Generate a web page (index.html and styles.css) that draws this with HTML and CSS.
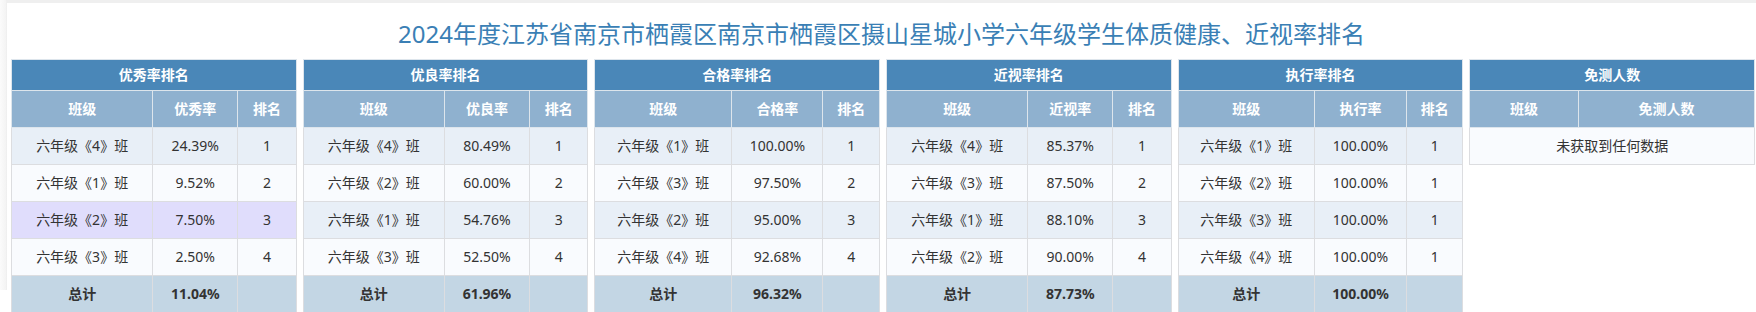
FILE: index.html
```html
<!DOCTYPE html>
<html lang="zh-CN">
<head>
<meta charset="utf-8">
<title>体质健康、近视率排名</title>
<link rel="stylesheet" href="styles.css">
</head>
<body>
<div class="page">
  <div class="side"></div>
  <div class="main">
    <div class="topbar"></div>
    <h1 class="title">2024年度江苏省南京市栖霞区南京市栖霞区摄山星城小学六年级学生体质健康、近视率排名</h1>
    <div class="grid">
      <table class="rank">
        <thead>
          <tr><th class="cap" colspan="3">优秀率排名</th></tr>
          <tr class="sub"><th>班级</th><th>优秀率</th><th>排名</th></tr>
        </thead>
        <tbody>
          <tr><td>六年级《4》班</td><td>24.39%</td><td>1</td></tr>
          <tr><td>六年级《1》班</td><td>9.52%</td><td>2</td></tr>
          <tr class="hover"><td>六年级《2》班</td><td>7.50%</td><td>3</td></tr>
          <tr><td>六年级《3》班</td><td>2.50%</td><td>4</td></tr>
          <tr class="total"><td>总计</td><td>11.04%</td><td></td></tr>
        </tbody>
      </table>
      <table class="rank">
        <thead>
          <tr><th class="cap" colspan="3">优良率排名</th></tr>
          <tr class="sub"><th>班级</th><th>优良率</th><th>排名</th></tr>
        </thead>
        <tbody>
          <tr><td>六年级《4》班</td><td>80.49%</td><td>1</td></tr>
          <tr><td>六年级《2》班</td><td>60.00%</td><td>2</td></tr>
          <tr><td>六年级《1》班</td><td>54.76%</td><td>3</td></tr>
          <tr><td>六年级《3》班</td><td>52.50%</td><td>4</td></tr>
          <tr class="total"><td>总计</td><td>61.96%</td><td></td></tr>
        </tbody>
      </table>
      <table class="rank">
        <thead>
          <tr><th class="cap" colspan="3">合格率排名</th></tr>
          <tr class="sub"><th>班级</th><th>合格率</th><th>排名</th></tr>
        </thead>
        <tbody>
          <tr><td>六年级《1》班</td><td>100.00%</td><td>1</td></tr>
          <tr><td>六年级《3》班</td><td>97.50%</td><td>2</td></tr>
          <tr><td>六年级《2》班</td><td>95.00%</td><td>3</td></tr>
          <tr><td>六年级《4》班</td><td>92.68%</td><td>4</td></tr>
          <tr class="total"><td>总计</td><td>96.32%</td><td></td></tr>
        </tbody>
      </table>
      <table class="rank">
        <thead>
          <tr><th class="cap" colspan="3">近视率排名</th></tr>
          <tr class="sub"><th>班级</th><th>近视率</th><th>排名</th></tr>
        </thead>
        <tbody>
          <tr><td>六年级《4》班</td><td>85.37%</td><td>1</td></tr>
          <tr><td>六年级《3》班</td><td>87.50%</td><td>2</td></tr>
          <tr><td>六年级《1》班</td><td>88.10%</td><td>3</td></tr>
          <tr><td>六年级《2》班</td><td>90.00%</td><td>4</td></tr>
          <tr class="total"><td>总计</td><td>87.73%</td><td></td></tr>
        </tbody>
      </table>
      <table class="rank">
        <thead>
          <tr><th class="cap" colspan="3">执行率排名</th></tr>
          <tr class="sub"><th>班级</th><th>执行率</th><th>排名</th></tr>
        </thead>
        <tbody>
          <tr><td>六年级《1》班</td><td>100.00%</td><td>1</td></tr>
          <tr><td>六年级《2》班</td><td>100.00%</td><td>1</td></tr>
          <tr><td>六年级《3》班</td><td>100.00%</td><td>1</td></tr>
          <tr><td>六年级《4》班</td><td>100.00%</td><td>1</td></tr>
          <tr class="total"><td>总计</td><td>100.00%</td><td></td></tr>
        </tbody>
      </table>
      <table class="rank">
        <thead>
          <tr><th class="cap" colspan="2">免测人数</th></tr>
          <tr class="sub"><th>班级</th><th>免测人数</th></tr>
        </thead>
        <tbody>
          <tr class="empty"><td colspan="2">未获取到任何数据</td></tr>
        </tbody>
      </table>
    </div>
  </div>
</div>
</body>
</html>
```
FILE: styles.css
```css
* { box-sizing: border-box; }
html, body { margin: 0; padding: 0; background: #fff; }
body {
  font-family: "Noto Sans", "Noto Sans CJK SC", sans-serif;
  font-size: 14px;
  color: #333;
}
.page { display: flex; align-items: flex-start; }
.side {
  width: 7px;
  flex: none;
  height: 290px;
  background: linear-gradient(to right, #fbfbfb, #f4f4f4 80%, #ededed);
}
.main { flex: 1; min-width: 0; }
.topbar { height: 3px; background: #efefef; }
.title {
  margin: 0;
  padding: 14px 0 8px;
  line-height: 34px;
  text-align: center;
  font-size: 24px;
  font-weight: normal;
  color: #3a7fb5;
  font-family: "Noto Sans", "Noto Sans CJK SC", sans-serif;
}
.grid {
  display: grid;
  grid-template-columns: repeat(6, 1fr);
  column-gap: 6px;
  padding: 0 1px 0 4px;
  align-items: start;
}
.rank {
  width: 100%;
  border-collapse: collapse;
  border: 1px solid #d6d9dc;
  text-align: center;
}
.rank th, .rank td {
  padding: 0 8px;
  white-space: nowrap;
}
.rank th {
  color: #fff;
  font-weight: bold;
  border: 1px solid #dde5ec;
}
.rank .cap {
  background: #4a87b8;
  height: 31px;
  line-height: 30px;
}
.rank .sub th {
  background: #8fb1cf;
  height: 37px;
  line-height: 36px;
}
.rank td {
  border: 1px solid #dcdde0;
  height: 37px;
  line-height: 36px;
}
.rank tbody tr:nth-child(odd) td { background: #e8eff7; }
.rank tbody tr:nth-child(even) td { background: #f9fbfe; }
.rank tbody tr.hover td { background: #e0ddfc; }
.rank tbody tr.total td {
  background: #c3d6e4;
  font-weight: bold;
}
.rank tbody tr.empty td { background: #f9fbfe; }
```
